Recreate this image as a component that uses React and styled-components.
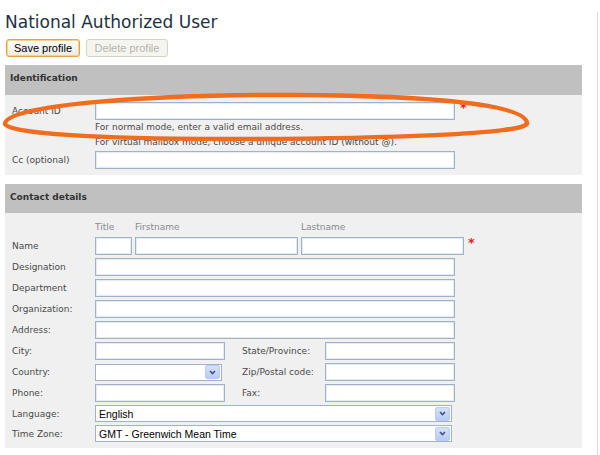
import React from 'react';
import styled, { createGlobalStyle } from 'styled-components';

const GlobalStyle = createGlobalStyle`
  html, body {
    margin: 0;
    padding: 0;
    background: #ffffff;
  }
  body {
    font-family: "DejaVu Sans", Verdana, sans-serif;
    color: #444;
  }
`;

const Page = styled.div`
  position: relative;
  width: 598px;
  min-height: 455px;
  box-sizing: border-box;
  padding-left: 5px;
  border-right: 1px solid #dadada;
`;

const Title = styled.h1`
  margin: 12px 0 0;
  font-family: "DejaVu Sans", Verdana, sans-serif;
  font-weight: normal;
  font-size: 17px;
  line-height: 20px;
  color: #1d3240;
`;

const Toolbar = styled.div`
  display: flex;
  gap: 6px;
  margin-top: 7px;
  padding-left: 1px;
`;

const Button = styled.button`
  height: 18px;
  width: ${p => p.$width}px;
  padding: 0;
  box-sizing: border-box;
  font-family: "Liberation Sans", Arial, sans-serif;
  font-size: 11px;
  line-height: 14px;
  border-radius: 3px;
  color: ${p => (p.disabled ? '#b4b4aa' : '#000')};
  background: ${p => (p.disabled ? '#f5f5f0' : 'linear-gradient(#fdfdfb, #ecebe4)')};
  border: 1px solid ${p => (p.disabled ? '#d3d3c8' : '#e3a23c')};
  box-shadow: ${p => (p.disabled ? 'none' : 'inset 0 0 0 1px #f6d28c')};
`;

const Form = styled.div`
  width: 577px;
  margin-top: 8px;
`;

const Section = styled.section`
  & + & {
    margin-top: 9px;
  }
`;

const SectionHeader = styled.div`
  height: ${p => p.$height}px;
  box-sizing: border-box;
  padding: 7px 0 0 5px;
  background: #c0c0c0;
  font-size: 9px;
  line-height: 12px;
  font-weight: bold;
  color: #333;
`;

const SectionBody = styled.div`
  display: grid;
  row-gap: 3px;
  padding: ${p => p.$pad};
  background: #f0f0f0;
`;

const Row = styled.div`
  display: grid;
  grid-template-columns: ${p => p.$cols};
  align-items: center;
  height: ${p => p.$height || 18}px;
`;

const Label = styled.label`
  font-size: 9px;
  line-height: 12px;
  color: #4a4a4a;
  white-space: nowrap;
  padding-left: ${p => p.$indent || 0}px;
`;

const SubLabel = styled.span`
  font-size: 9px;
  line-height: 12px;
  color: #8a8a8a;
`;

const Input = styled.input`
  display: block;
  width: ${p => (p.$width ? `${p.$width}px` : '100%')};
  height: 18px;
  margin: 0;
  box-sizing: border-box;
  border: 1px solid #9fb2c9;
  box-shadow: inset 0 0 0 1px #e4eaf2;
  background: #fff;
`;

const Help = styled.div`
  margin: -3px 0 -2px 83px;
  font-size: 9px;
  line-height: 15px;
  color: #4a4a4a;
`;

const Required = styled.span`
  align-self: start;
  margin-left: ${p => p.$gap}px;
  font-size: 13px;
  font-weight: bold;
  line-height: 12px;
  color: #e8202a;
`;

const NameFields = styled.div`
  display: grid;
  grid-template-columns: 37px 163px 163px;
  column-gap: 3px;
  align-items: center;
`;

const SelectBox = styled.div`
  display: flex;
  align-items: center;
  justify-content: space-between;
  width: ${p => p.$width}px;
  height: ${p => p.$height}px;
  box-sizing: border-box;
  padding: 0 1px 0 3px;
  border: 1px solid #9fb2c9;
  background: #fff;
  font-family: "Liberation Sans", Arial, sans-serif;
  font-size: 10.5px;
  color: #000;
`;

const ArrowButton = styled.span`
  display: flex;
  align-items: center;
  justify-content: center;
  width: 13px;
  height: ${p => p.$size}px;
  border-radius: 2px;
  border: 1px solid #b9cbf3;
  background: linear-gradient(#d4e0fb, #b8cbf6);
`;

const Annotation = styled.svg`
  position: absolute;
  left: 0;
  top: 0;
  pointer-events: none;
`;

const Select = ({ width, height = 17, value }) => (
  <SelectBox $width={width} $height={height}>
    <span>{value}</span>
    <ArrowButton $size={height - 5}>
      <svg width="7" height="5" viewBox="0 0 7 5">
        <polyline points="1,1 3.5,3.5 6,1" fill="none" stroke="#3e5377" strokeWidth="1.6" />
      </svg>
    </ArrowButton>
  </SelectBox>
);

const FULL = '83px 360px auto';
const NAME = '83px 369px auto';
const PAIR = '83px 130px 100px 130px';

export default function App() {
  return (
    <>
      <GlobalStyle />
      <Page>
        <Title>National Authorized User</Title>
        <Toolbar>
          <Button $width={74}>Save profile</Button>
          <Button $width={82} disabled>Delete profile</Button>
        </Toolbar>

        <Form>
          <Section>
            <SectionHeader $height={30}>Identification</SectionHeader>
            <SectionBody $pad="7px 0 6px 7px">
              <Row $cols={FULL}>
                <Label>Account ID</Label>
                <Input />
                <Required $gap={5}>*</Required>
              </Row>
              <Help>
                For normal mode, enter a valid email address.
                <br />
                For virtual mailbox mode, choose a unique account ID (without @).
              </Help>
              <Row $cols={FULL}>
                <Label>Cc (optional)</Label>
                <Input />
              </Row>
            </SectionBody>
          </Section>

          <Section>
            <SectionHeader $height={29}>Contact details</SectionHeader>
            <SectionBody $pad="7px 0 6px 7px">
              <Row $cols={NAME} $height={14}>
                <span />
                <NameFields>
                  <SubLabel>Title</SubLabel>
                  <SubLabel>Firstname</SubLabel>
                  <SubLabel>Lastname</SubLabel>
                </NameFields>
              </Row>
              <Row $cols={NAME}>
                <Label>Name</Label>
                <NameFields>
                  <Input />
                  <Input />
                  <Input />
                </NameFields>
                <Required $gap={4}>*</Required>
              </Row>
              <Row $cols={FULL}>
                <Label>Designation</Label>
                <Input />
              </Row>
              <Row $cols={FULL}>
                <Label>Department</Label>
                <Input />
              </Row>
              <Row $cols={FULL}>
                <Label>Organization:</Label>
                <Input />
              </Row>
              <Row $cols={FULL}>
                <Label>Address:</Label>
                <Input />
              </Row>
              <Row $cols={PAIR}>
                <Label>City:</Label>
                <Input />
                <Label $indent={17}>State/Province:</Label>
                <Input />
              </Row>
              <Row $cols={PAIR}>
                <Label>Country:</Label>
                <Select width={127} />
                <Label $indent={17}>Zip/Postal code:</Label>
                <Input />
              </Row>
              <Row $cols={PAIR}>
                <Label>Phone:</Label>
                <Input />
                <Label $indent={17}>Fax:</Label>
                <Input />
              </Row>
              <Row $cols={FULL} $height={17}>
                <Label>Language:</Label>
                <Select width={357} value="English" />
              </Row>
              <Row $cols={FULL} $height={17}>
                <Label>Time Zone:</Label>
                <Select width={357} value="GMT - Greenwich Mean Time" />
              </Row>
            </SectionBody>
          </Section>
        </Form>

        <Annotation width="600" height="455" viewBox="0 0 600 455">
          <path
            d="M 527 111 C 525 92, 430 84, 300 83 C 160 82, 5 92, 5 112 C 5 121, 100 127, 220 127 C 380 127, 530 122, 527 111 Z"
            fill="none"
            stroke="#f26c1e"
            strokeWidth="4.5"
          />
        </Annotation>
      </Page>
    </>
  );
}
